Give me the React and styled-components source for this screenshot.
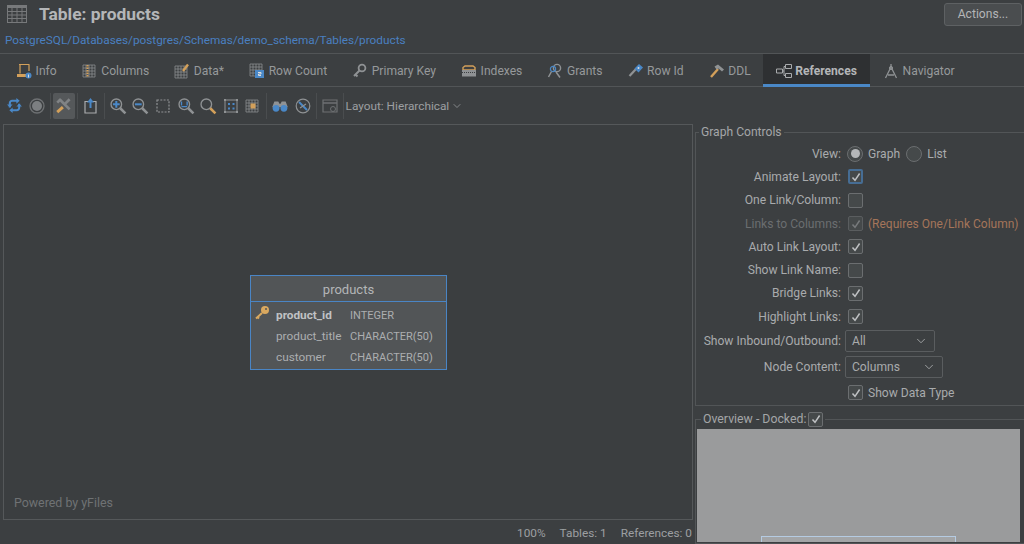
import { Fragment } from "react";
import styled, { createGlobalStyle } from "styled-components";
import { ChevronDown } from "lucide-react";

const GlobalStyle = createGlobalStyle`
  html, body {
    margin: 0;
    padding: 0;
    background: #3c3f41;
  }
  * {
    box-sizing: border-box;
  }
`;

const GRAY = "#8f9294";
const LIGHT = "#a9abad";
const ORANGE = "#d3a05a";
const BLUE = "#4a88c7";

// ---- icons ----

const Svg = ({ size = 16, children }) => (
  <svg width={size} height={size} viewBox="0 0 16 16" fill="none">
    {children}
  </svg>
);

const GridLines = ({ color = GRAY }) => (
  <path
    d="M1 2h12M1 5h12M1 8h12M1 11h12M1 14h12M1 2v12M4 2v12M7 2v12M10 2v12M13 2v12"
    stroke={color}
    strokeWidth="1"
    opacity="0.75"
  />
);

const TabIcons = {
  info: (
    <Svg>
      <path d="M3 1.5h10.5M4 1.5v9M13 2v6" stroke={ORANGE} strokeWidth="1.2" />
      <path d="M1 11h9v3H1z" fill={ORANGE} />
      <circle cx="12.5" cy="12.5" r="3" fill={BLUE} />
      <path d="M12.5 11.5v3" stroke="#ddd" />
    </Svg>
  ),
  columns: (
    <Svg>
      <GridLines />
      <path d="M5.5 2v12" stroke={ORANGE} strokeWidth="2" strokeDasharray="1.5 1" />
    </Svg>
  ),
  data: (
    <Svg>
      <g transform="translate(0 1)">
        <GridLines />
      </g>
      <path d="M9 8l5-6.5" stroke={ORANGE} strokeWidth="2.4" />
    </Svg>
  ),
  rowCount: (
    <Svg>
      <g transform="translate(0 -1)">
        <GridLines />
      </g>
      <rect x="6" y="7" width="9" height="8" fill={BLUE} />
      <path d="M9 9.5h3V11H9.5v1.5H12" stroke="#ddd" />
    </Svg>
  ),
  primaryKey: (
    <Svg>
      <circle cx="10" cy="5" r="3.4" stroke={GRAY} strokeWidth="1.8" />
      <path d="M7.5 7.5L2 13M3.5 11.5l2 2" stroke={GRAY} strokeWidth="2" />
    </Svg>
  ),
  indexes: (
    <Svg>
      <path d="M2 7V4.5L4 3h8l2 1.5V7z" stroke={ORANGE} strokeWidth="1.4" />
      <path d="M1 7h14v6.5H1z" fill={GRAY} />
      <path d="M1 9.5h14" stroke="#3c3f41" strokeDasharray="1 1" />
    </Svg>
  ),
  grants: (
    <Svg>
      <circle cx="10" cy="5" r="3.6" stroke={GRAY} strokeWidth="1.4" />
      <circle cx="6" cy="6" r="2.6" stroke={BLUE} strokeWidth="1.2" />
      <path d="M4.5 8.5L1.5 14M9 9l4 5.5" stroke={GRAY} strokeWidth="1.5" />
    </Svg>
  ),
  rowId: (
    <Svg>
      <path d="M8 6l-6.5 7" stroke={GRAY} strokeWidth="2.2" />
      <path d="M6.5 5.5L11 1l4 3.5-4.5 5z" fill={BLUE} />
      <circle cx="10.5" cy="5" r="1" fill="#ddd" />
    </Svg>
  ),
  ddl: (
    <Svg>
      <path d="M9 6l-7 8" stroke={ORANGE} strokeWidth="2.4" />
      <path d="M5.5 3.5L9 1.5l6 5-2 2-3.5-3-2 1z" fill={GRAY} />
    </Svg>
  ),
  references: (
    <Svg>
      <path
        d="M.5 6h6v4h-6zM9.5 1.5h6v4h-6zM9.5 10.5h6v4h-6zM6.5 8H8M8 3.5v9M8 3.5h1.5M8 12.5h1.5"
        stroke="#a9abad"
      />
    </Svg>
  ),
  navigator: (
    <Svg>
      <path d="M8 1v3M8 4L2.5 15M8 4l5.5 11M5 12h6" stroke={GRAY} strokeWidth="1.3" />
      <circle cx="8" cy="5" r="1.6" stroke={GRAY} />
    </Svg>
  ),
};

const Magnifier = ({ handle = GRAY, children }) => (
  <Svg size={18}>
    <circle cx="6.5" cy="6.5" r="4.7" stroke={GRAY} strokeWidth="1.2" />
    <path d="M10 10l4.6 4.6" stroke={handle} strokeWidth="2.2" />
    {children}
  </Svg>
);

const ToolIcons = {
  refresh: (
    <Svg size={15}>
      <path
        d="M3 10V5.5A2.5 2.5 0 0 1 5.5 3H11M13 6v4.5a2.5 2.5 0 0 1-2.5 2.5H5"
        stroke={BLUE}
        strokeWidth="2.2"
      />
      <path d="M10 0l3.5 3L10 6zM6 10l-3.5 3L6 16zM0 7h6l-3 3zM10 9h6l-3-3z" fill={BLUE} />
    </Svg>
  ),
  stop: (
    <Svg>
      <circle cx="8" cy="8" r="7" stroke="#6e7173" strokeWidth="1.3" />
      <circle cx="8" cy="8" r="5" fill="#7c7f81" />
    </Svg>
  ),
  tools: (
    <Svg size={18}>
      <path d="M4 2l9 9M2 5l3-3" stroke="#808385" strokeWidth="2.4" />
      <path d="M13 2L8 7" stroke="#808385" strokeWidth="2.4" />
      <path d="M7 9l-5 4.5" stroke={ORANGE} strokeWidth="2.6" />
    </Svg>
  ),
  upload: (
    <Svg>
      <path d="M5 3.5H2V15h11V3.5h-3" stroke="#a9abad" strokeWidth="1.2" />
      <path d="M7.5 10V3" stroke={BLUE} strokeWidth="2" />
      <path d="M4 4.5L7.5 0 11 4.5z" fill={BLUE} />
    </Svg>
  ),
  zoomIn: (
    <Magnifier>
      <path d="M3.5 6.5h6M6.5 3.5v6" stroke={BLUE} strokeWidth="1.8" />
    </Magnifier>
  ),
  zoomOut: (
    <Magnifier>
      <path d="M3.5 6.5h6" stroke={BLUE} strokeWidth="1.8" />
    </Magnifier>
  ),
  marquee: (
    <Svg>
      <path d="M2 2h12v12H2z" stroke={GRAY} strokeWidth="1.2" strokeDasharray="2 1.3" />
    </Svg>
  ),
  zoomFit: (
    <Magnifier>
      <path d="M4 4v3.5M9 4v3.5M4 8.5h5" stroke={BLUE} strokeWidth="1.2" />
    </Magnifier>
  ),
  zoomReset: <Magnifier handle={ORANGE} />,
  fitContent: (
    <Svg>
      <path d="M2 2h12v12H2z" stroke={GRAY} />
      <path d="M1 1h2v2H1zM13 1h2v2h-2zM1 13h2v2H1zM13 13h2v2h-2z" fill={GRAY} />
      <path d="M5 5h2v2H5zM9.5 5h2v2h-2zM5 9.5h2v2H5zM9.5 9.5h2v2h-2z" fill={BLUE} />
    </Svg>
  ),
  fitSelection: (
    <Svg>
      <GridLines />
      <rect x="5.5" y="5.5" width="5" height="5" fill={ORANGE} />
    </Svg>
  ),
  binoculars: (
    <Svg size={18}>
      <path d="M1 9l2-5h3.5l1 2h1l1-2H13l2 5z" fill={GRAY} />
      <circle cx="4.5" cy="10" r="3" fill={BLUE} />
      <circle cx="11.5" cy="10" r="3" fill={BLUE} />
    </Svg>
  ),
  compass: (
    <Svg>
      <circle cx="8" cy="8" r="6.8" stroke={GRAY} strokeWidth="1.2" />
      <path d="M4 4l8 8" stroke={BLUE} strokeWidth="2" />
      <path d="M5 10l6-4" stroke={GRAY} strokeWidth="1.2" />
    </Svg>
  ),
  windowIcon: (
    <Svg>
      <path d="M1 2h14v12H1z" stroke="#6e7173" strokeWidth="1.2" />
      <path d="M1 5h14" stroke="#6e7173" strokeWidth="1.5" />
      <circle cx="11" cy="11" r="2.5" stroke="#6e7173" />
    </Svg>
  ),
};

const CheckMark = () => (
  <svg width="10" height="10" viewBox="0 0 10 10" fill="none">
    <path d="M1.5 5.5L4 8.3l4.6-6.8" stroke="currentColor" strokeWidth="1.5" />
  </svg>
);

// ---- data ----

const TABS = [
  { icon: "info", label: "Info" },
  { icon: "columns", label: "Columns" },
  { icon: "data", label: "Data*" },
  { icon: "rowCount", label: "Row Count" },
  { icon: "primaryKey", label: "Primary Key" },
  { icon: "indexes", label: "Indexes" },
  { icon: "grants", label: "Grants" },
  { icon: "rowId", label: "Row Id" },
  { icon: "ddl", label: "DDL" },
  { icon: "references", label: "References", active: true },
  { icon: "navigator", label: "Navigator" },
];

const TOOL_GROUPS = [
  ["refresh", "stop"],
  ["tools"],
  ["upload"],
  ["zoomIn", "zoomOut", "marquee", "zoomFit", "zoomReset", "fitContent", "fitSelection"],
  ["binoculars", "compass"],
  ["windowIcon"],
];

const COLUMNS = [
  { name: "product_id", type: "INTEGER", primary: true },
  { name: "product_title", type: "CHARACTER(50)" },
  { name: "customer", type: "CHARACTER(50)" },
];

// ---- styled parts ----

const Page = styled.div`
  width: 1024px;
  height: 544px;
  overflow: hidden;
  display: flex;
  flex-direction: column;
  background: #3c3f41;
  color: ${LIGHT};
  font-family: Roboto, "Noto Sans", sans-serif;
  font-size: 12.1px;
`;

const Header = styled.header`
  height: 54px;
  flex: none;
  padding: 2px 2px 0 5px;
  border-bottom: 1px solid #525557;
`;

const TitleRow = styled.div`
  display: flex;
  align-items: center;
  height: 24px;
`;

const TableGlyph = styled.span`
  display: flex;
  margin: 0 12px 0 2px;
`;

const Title = styled.h1`
  flex: 1;
  margin: 0;
  font-size: 17.4px;
  font-weight: 700;
  color: #b4b6b8;
`;

const ActionsButton = styled.button`
  width: 78px;
  height: 23px;
  padding: 0;
  border: 1px solid #5e6163;
  border-radius: 3px;
  background: #4a4d4f;
  color: #b4b6b8;
  font: inherit;
`;

const PathLink = styled.a`
  display: block;
  margin-top: 5px;
  color: #4a7fc0;
  font-size: 11.8px;
  line-height: 18px;
`;

const TabBar = styled.nav`
  height: 33px;
  flex: none;
  display: flex;
  padding-left: 3px;
  border-bottom: 1px solid #525557;
`;

const Tab = styled.div`
  display: flex;
  align-items: center;
  gap: 3.6px;
  height: 33px;
  padding: ${(p) => (p.$active ? "3px 13px 0 13px" : "0 12px 0 13px")};
  font-weight: ${(p) => (p.$active ? 700 : 400)};
  color: ${(p) => (p.$active ? "#b4b6b8" : "#96999b")};
  background: ${(p) => (p.$active ? "#2e3032" : "transparent")};
  border-bottom: ${(p) => (p.$active ? `3px solid ${BLUE}` : "none")};
`;

const Toolbar = styled.div`
  height: 37px;
  flex: none;
  display: flex;
  align-items: center;
  padding-left: 3px;
`;

const ToolButton = styled.div`
  width: 22.6px;
  height: 26px;
  display: flex;
  align-items: center;
  justify-content: center;
  border-radius: 2px;
  background: ${(p) => (p.$active ? "#55585a" : "transparent")};
`;

const ToolSeparator = styled.span`
  width: 1px;
  height: 26px;
  margin: 0 1.7px;
  background: #4a4d4f;
`;

const LayoutPicker = styled.div`
  display: flex;
  align-items: center;
  gap: 2px;
  color: #9c9fa1;
  font-size: 11.8px;
`;

const Main = styled.main`
  flex: 1;
  min-height: 0;
  display: flex;
  padding-left: 3px;
`;

const GraphColumn = styled.section`
  width: 690px;
  flex: none;
  display: flex;
  flex-direction: column;
`;

const Canvas = styled.div`
  position: relative;
  flex: 1;
  background: #3b3e40;
  border: 1px solid #55585a;
`;

const Watermark = styled.span`
  position: absolute;
  left: 10px;
  bottom: 9px;
  color: #6f7274;
  font-size: 12.4px;
`;

const TableNode = styled.div`
  position: absolute;
  left: 246px;
  top: 150px;
  width: 197px;
  height: 95px;
  background: #525557;
  border: 1.5px solid #4a85c5;
`;

const NodeTitle = styled.div`
  height: 25.5px;
  line-height: 27px;
  text-align: center;
  color: #b4b6b8;
  border-bottom: 1.5px solid #4a85c5;
  font-size: 13px;
`;

const NodeRows = styled.div`
  display: grid;
  grid-template-columns: 99px auto;
  grid-auto-rows: 21px;
  padding: 3px 0 0;
  align-items: center;
`;

const ColumnName = styled.div`
  position: relative;
  padding-left: 25px;
  font-size: 11.8px;
  font-weight: ${(p) => (p.$primary ? 700 : 400)};
  color: ${(p) => (p.$primary ? "#c0c2c4" : "#acaeb0")};
  white-space: nowrap;
`;

const KeyBadge = styled.span`
  position: absolute;
  left: 3px;
  top: -3px;
  display: flex;
`;

const ColumnType = styled.div`
  font-size: 11px;
  color: #acaeb0;
`;

const StatusBar = styled.footer`
  height: 24px;
  flex: none;
  display: flex;
  justify-content: flex-end;
  align-items: center;
  gap: 14px;
  padding: 1px 1px 0 0;
  color: #9c9fa1;
  font-size: 11.8px;
`;

const SidePanel = styled.aside`
  flex: 1;
  min-width: 0;
  margin-left: 2px;
  display: flex;
  flex-direction: column;
`;

const GroupBox = styled.fieldset`
  margin: 0;
  padding: 0;
  min-width: 0;
  border: 1px solid #525557;
  border-right: none;
`;

const GroupTitle = styled.legend`
  display: flex;
  align-items: center;
  gap: 2px;
  margin-left: 3px;
  padding: 0 2px;
  line-height: 16px;
  color: #a4a6a8;
`;

const OverviewTitle = styled(GroupTitle)`
  margin-left: 4px;
  font-size: 12.3px;
`;

const ControlsBox = styled(GroupBox)`
  height: 282px;
`;

const FormGrid = styled.div`
  display: grid;
  grid-template-columns: 145px 1fr;
  grid-template-rows: repeat(8, 23.3px) repeat(3, 25.8px);
  column-gap: 7px;
  align-items: center;
  padding-top: 2px;
`;

const FieldLabel = styled.label`
  text-align: right;
  white-space: nowrap;
  color: ${(p) => (p.$disabled ? "#6b6e70" : LIGHT)};
`;

const FieldValue = styled.div`
  display: flex;
  align-items: center;
  gap: 5px;
  white-space: nowrap;
`;

const Box = styled.span`
  width: 15px;
  height: 15px;
  flex: none;
  display: flex;
  align-items: center;
  justify-content: center;
  border-radius: 2px;
  border: ${(p) => (p.$focused ? "2px" : "1px")} solid
    ${(p) => (p.$focused ? "#466d94" : p.$disabled ? "#5a5d5f" : "#6b6e70")};
  background: #45494a;
  color: ${(p) => (p.$disabled ? "#777a7c" : "#bfc1c3")};
`;

const RadioGroup = styled.div`
  display: flex;
  align-items: center;
  gap: 6px;
  margin-left: -1px;
`;

const RadioOption = styled.span`
  display: flex;
  align-items: center;
  gap: 5px;
`;

const RadioDot = styled.span`
  width: 16px;
  height: 16px;
  flex: none;
  display: flex;
  align-items: center;
  justify-content: center;
  border-radius: 50%;
  border: 1px solid #6b6e70;
  background: #45494a;

  &::after {
    content: "";
    display: ${(p) => (p.$checked ? "block" : "none")};
    width: 9px;
    height: 9px;
    border-radius: 50%;
    background: #b4b6b8;
  }
`;

const Hint = styled.span`
  color: #a5755a;
  font-size: 12px;
`;

const Combo = styled.div`
  width: ${(p) => p.$width}px;
  height: 22px;
  margin-left: -3px;
  padding: 0 6px;
  display: flex;
  align-items: center;
  justify-content: space-between;
  border: 1px solid #5a5d5f;
  border-radius: 2px;
  background: #3c3f41;
`;

const OverviewBox = styled(GroupBox)`
  flex: 1;
  min-height: 0;
  margin-top: 5px;
  padding: 2px 4px 0 1px;
`;

const OverviewPreview = styled.div`
  height: 113px;
  display: flex;
  justify-content: center;
  align-items: flex-end;
  background: #9a9b9c;
`;

const ViewportMark = styled.div`
  width: 195px;
  height: 6px;
  border: 1px solid #b5cbe2;
  border-bottom: none;
  background: #a3a5a7;
`;

// ---- small components ----

const CheckBox = ({ checked, focused, disabled }) => (
  <Box $focused={focused} $disabled={disabled}>
    {checked && <CheckMark />}
  </Box>
);

const CheckRow = ({ label, disabled, children, ...rest }) => (
  <>
    <FieldLabel $disabled={disabled}>{label}</FieldLabel>
    <FieldValue>
      <CheckBox disabled={disabled} {...rest} />
      {children}
    </FieldValue>
  </>
);

const ComboRow = ({ label, value, width }) => (
  <>
    <FieldLabel>{label}</FieldLabel>
    <FieldValue>
      <Combo $width={width}>
        {value}
        <ChevronDown size={14} strokeWidth={1.5} />
      </Combo>
    </FieldValue>
  </>
);

const App = () => (
  <Page>
    <GlobalStyle />
    <Header>
      <TitleRow>
        <TableGlyph>
          <svg width="20" height="20" viewBox="0 0 20 20" fill="none">
            <path d="M0 1h20v3H0z" fill="#77797b" />
            <path
              d="M.5 1v18M5 4v15M10 4v15M15 4v15M19.5 1v18M0 7.5h20M0 11h20M0 14.5h20M0 18.5h20"
              stroke="#77797b"
            />
          </svg>
        </TableGlyph>
        <Title>Table: products</Title>
        <ActionsButton type="button">Actions...</ActionsButton>
      </TitleRow>
      <PathLink>PostgreSQL/Databases/postgres/Schemas/demo_schema/Tables/products</PathLink>
    </Header>

    <TabBar>
      {TABS.map((tab) => (
        <Tab key={tab.label} $active={tab.active}>
          {TabIcons[tab.icon]}
          {tab.label}
        </Tab>
      ))}
    </TabBar>

    <Toolbar>
      {TOOL_GROUPS.map((group) => (
        <Fragment key={group[0]}>
          {group.map((name) => (
            <ToolButton key={name} $active={name === "tools"}>
              {ToolIcons[name]}
            </ToolButton>
          ))}
          <ToolSeparator />
        </Fragment>
      ))}
      <LayoutPicker>
        Layout: Hierarchical
        <ChevronDown size={12} strokeWidth={1.5} />
      </LayoutPicker>
    </Toolbar>

    <Main>
      <GraphColumn>
        <Canvas>
          <TableNode>
            <NodeTitle>products</NodeTitle>
            <NodeRows>
              {COLUMNS.map((col) => (
                <Fragment key={col.name}>
                  <ColumnName $primary={col.primary}>
                    {col.primary && (
                      <KeyBadge>
                        <svg width="16" height="16" viewBox="0 0 16 16" fill="none">
                          <circle cx="11" cy="5" r="4" fill="#d9a85f" />
                          <path d="M8 8l-6 5.5M3.5 12L5 13.5" stroke="#d9a85f" strokeWidth="2" />
                          <circle cx="12" cy="4" r="1" fill="#525557" />
                        </svg>
                      </KeyBadge>
                    )}
                    {col.name}
                  </ColumnName>
                  <ColumnType>{col.type}</ColumnType>
                </Fragment>
              ))}
            </NodeRows>
          </TableNode>
          <Watermark>Powered by yFiles</Watermark>
        </Canvas>
        <StatusBar>
          <span>100%</span>
          <span>Tables: 1</span>
          <span>References: 0</span>
        </StatusBar>
      </GraphColumn>

      <SidePanel>
        <ControlsBox>
          <GroupTitle>Graph Controls</GroupTitle>
          <FormGrid>
            <FieldLabel>View:</FieldLabel>
            <FieldValue>
              <RadioGroup>
                <RadioOption>
                  <RadioDot $checked />
                  Graph
                </RadioOption>
                <RadioOption>
                  <RadioDot />
                  List
                </RadioOption>
              </RadioGroup>
            </FieldValue>
            <CheckRow label="Animate Layout:" checked focused />
            <CheckRow label="One Link/Column:" />
            <CheckRow label="Links to Columns:" checked disabled>
              <Hint>(Requires One/Link Column)</Hint>
            </CheckRow>
            <CheckRow label="Auto Link Layout:" checked />
            <CheckRow label="Show Link Name:" />
            <CheckRow label="Bridge Links:" checked />
            <CheckRow label="Highlight Links:" checked />
            <ComboRow label="Show Inbound/Outbound:" value="All" width={90} />
            <ComboRow label="Node Content:" value="Columns" width={98} />
            <span />
            <FieldValue>
              <CheckBox checked />
              Show Data Type
            </FieldValue>
          </FormGrid>
        </ControlsBox>
        <OverviewBox>
          <OverviewTitle>
            Overview - Docked:
            <CheckBox checked />
          </OverviewTitle>
          <OverviewPreview>
            <ViewportMark />
          </OverviewPreview>
        </OverviewBox>
      </SidePanel>
    </Main>
  </Page>
);

export default App;
